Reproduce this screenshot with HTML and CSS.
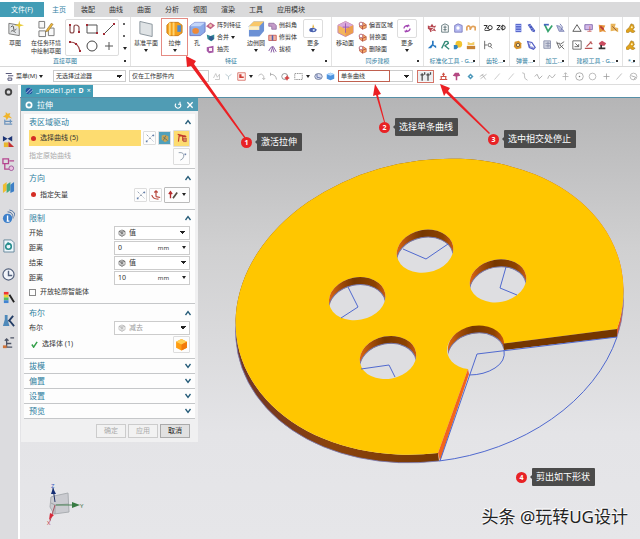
FILE: index.html
```html
<!DOCTYPE html>
<html lang="zh-CN">
<head>
<meta charset="utf-8">
<title>_model1.prt</title>
<link rel="stylesheet" href="styles.css">
</head>
<body>
<svg class="defs" aria-hidden="true">
  <symbol id="cube" viewBox="0 0 12 12"><path d="M1 3.500 6 1l5 2.500v5.500L6 11.500 1 9z" fill="#ff9d12"/><path d="m1 3.500 5 2.500 5-2.500L6 1z" fill="#ffcf55"/><path d="M6 6v5.500L11 9V3.500z" fill="#f27a0c"/></symbol>
  <symbol id="wirecube" viewBox="0 0 12 12"><path d="m1.500 3.500 4.500-2 4.500 2v5l-4.500 2.500-4.500-2.500zM1.500 3.500 6 5.500l4.500-2M6 5.500V11M3 5l6-2.500M3 8l3-1.500 3 1.500" fill="none" stroke="#555"/></symbol>
  <symbol id="points" viewBox="0 0 12 12"><path d="m2 2 8 8M10 2 2 10" stroke="#8793a6" stroke-dasharray="3 2"/><path d="M9 2h2v2H9zM1 9h2v2H1z" fill="#6480ad"/></symbol>
  <symbol id="up" viewBox="0 0 8 6"><path d="m1.500 5 2.500-3.500L6.500 5" fill="none" stroke="#245b78" stroke-width="1.300"/></symbol>
  <symbol id="down" viewBox="0 0 8 6"><path d="M1.500 1 4 4.500 6.500 1" fill="none" stroke="#245b78" stroke-width="1.300"/></symbol>
  <symbol id="face" viewBox="0 0 12 12"><path d="m2 4 5-2 4 3v4l-5 2-4-3z" fill="#f4a867" stroke="#b44c3a" stroke-width=".8"/><path d="m2 4 4 3v4M6 7l5-2" stroke="#a44038" fill="none"/><circle cx="4" cy="4" r="2.500" fill="#fff" stroke="#a44c63"/></symbol>
  <symbol id="more" viewBox="0 0 12 12"><path d="M1 8q0-3 5-3 5 1 5 3-1 3-5 3-5 0-5-3" fill="#4a60ae"/><path d="m6 0 2 5H5z" fill="#e4b13c"/><circle cx="7" cy="8" r="1.500" fill="#c7dcf5"/></symbol>
  <symbol id="gold" viewBox="0 0 12 12"><path d="m4 5 2-4 3 1 1 4-2 2 3 2-3 2-3-2-3 2-3-2z" fill="#e0a21c" stroke="#8f681c" stroke-width=".6"/><circle cx="7" cy="5" r="1.200" fill="#fff1bd"/></symbol>
</svg>

<div class="app">
  <nav class="tabs" aria-label="功能区">
    <a class="file" href="#">文件(F)</a><a class="active" href="#">主页</a><a href="#">装配</a><a href="#">曲线</a><a href="#">曲面</a><a href="#">分析</a><a href="#">视图</a><a href="#">渲染</a><a href="#">工具</a><a href="#">应用模块</a>
  </nav>

  <div class="ribbon">
    <section class="group">
      <div class="body">
        <button class="big w30"><svg viewBox="0 0 18 18"><path d="m2 3 11 2v11L2 14z" fill="#e4e6e8" stroke="#777"/><path d="M4 7q3-3 3 1t3 1M4 12q2-3 5 1" fill="none" stroke="#555"/><path d="m13 0 1 4 4 1-4 1-1 4-1-4-4-1 4-1z" fill="#e7ca31"/></svg><span>草图</span></button>
        <button class="big w32"><svg viewBox="0 0 18 18"><path d="M1 1h6v7H1zM1 11h7v6H1zM11 8h6v8h-6z" fill="#f8f8f8" stroke="#777"/><path d="m9 10 5-7 2 1-5 7-3 1z" fill="#edb83c" stroke="#8c6a2a" stroke-width=".6"/></svg><span>在任务环境<br>中绘制草图</span></button>
        <div class="gallery">
          <svg viewBox="0 0 12 12"><path d="M1 2v6q0 2 2 2t2-2V4q0-2 2-2t3 2v5" fill="none" stroke="#8b4c4c" stroke-width="1.200"/><path d="M0 1h2v2H0zM9 8h2v2H9z" fill="#a22b35"/></svg>
          <svg viewBox="0 0 12 12"><path d="M1 2h10v8H1z" fill="none" stroke="#555"/><path d="M0 1h2v2H0zM10 9h2v2h-2z" fill="#a22b35"/></svg>
          <svg viewBox="0 0 12 12"><path d="M1 11 11 1" stroke="#555"/><path d="M0 10h2v2H0zM10 0h2v2h-2z" fill="#a22b35"/></svg>
          <svg viewBox="0 0 12 12"><path d="M1 2q8 0 10 9" fill="none" stroke="#9a4c4c" stroke-width="1.200"/><path d="M0 1h2v2H0zM6 3h2v2H6zM10 10h2v2h-2z" fill="#a22b35"/></svg>
          <svg viewBox="0 0 12 12"><circle cx="6" cy="6" r="5" fill="none" stroke="#444"/></svg>
          <svg viewBox="0 0 12 12"><path d="M6 2v8M2 6h8" stroke="#555"/></svg>
        </div>
        <div class="scroll"><i></i><i></i><i class="arrow"></i></div>
      </div>
      <footer>直接草图</footer>
    </section>
    <section class="group">
      <div class="body">
        <button class="big w30"><svg viewBox="0 0 18 18"><path d="m2 1 13 3v13L2 14z" fill="#dfe3e5" stroke="#89949b"/></svg><span>基准平面</span><i class="arrow"></i></button>
        <button class="big w27 marked"><svg viewBox="0 0 18 18"><path d="m1 5 3-3h9l4 3v8l-4 3H4l-3-3z" fill="#f5a11b" stroke="#c97912"/><path d="M4 2v14M8 2v14" stroke="#ffd574" stroke-width="2"/><path d="M12 5h4v7h-4z" fill="#4e8bd1"/></svg><span>拉伸</span><i class="arrow"></i></button>
        <button class="big w18"><svg viewBox="0 0 18 18"><path d="m1 6 5-4h11v10l-5 4H1z" fill="#8baae8" stroke="#6c79c7"/><path d="m1 6 5-4h11l-5 4z" fill="#c3d6fb"/><ellipse cx="7" cy="11" rx="3.500" ry="3" fill="#ef8937"/></svg><span>孔</span></button>
        <div class="stack w38">
          <button><svg viewBox="0 0 12 12"><path d="m0 7 6-5 6 4-6 5z" fill="#c36488"/><circle cx="6" cy="6" r="2" fill="#efc5b0"/></svg>阵列特征</button>
          <button><svg viewBox="0 0 12 12"><path d="m1 2 5 2 5-2v6l-4 3-5-3z" fill="#328c97"/><circle cx="7" cy="7" r="3" fill="#315c91"/></svg>合并<i class="arrow"></i></button>
          <button><svg viewBox="0 0 12 12"><path d="m1 3 9-2v9l-6 1-3-3z" fill="#a75ba7"/><path d="M4 4h4v4H4z" fill="#fff0f5"/></svg>抽壳</button>
        </div>
        <button class="big w24"><svg viewBox="0 0 18 18"><path d="m1 6 5-5h11v10l-5 6H1z" fill="#6c91d5"/><path d="m1 6 5-5h11l-5 5z" fill="#f9c86a"/><path d="M1 6h11v4H1z" fill="#fff0c4"/></svg><span>边倒圆</span><i class="arrow"></i></button>
        <div class="stack w34">
          <button><svg viewBox="0 0 12 12"><path d="M1 3h7l3 3v5H5V7H1z" fill="#c49bc8" stroke="#8a6799"/></svg>倒斜角</button>
          <button><svg viewBox="0 0 12 12"><path d="M1 3h10v7H1z" fill="#f1b4a2" stroke="#c34a44"/><path d="M6 3v7" stroke="#4f63b0" stroke-width="2"/></svg>修剪体</button>
          <button><svg viewBox="0 0 12 12"><path d="m1 8 3-5 3-1 4 7M4 10l2-7 2 7" fill="none" stroke="#875aa3" stroke-width="1.300"/></svg>拔模</button>
        </div>
        <button class="big w22 boxed"><svg viewBox="0 0 12 12"><use href="#more"/></svg><span>更多</span><i class="arrow"></i></button>
      </div>
      <footer>特征</footer>
    </section>
    <section class="group">
      <div class="body">
        <button class="big w26"><svg viewBox="0 0 18 18"><path d="m1 5 8-4 8 4v8l-8 4-8-4z" fill="#f3b65e" stroke="#c485ae"/><path d="m1 5 8-4 8 4-8 4z" fill="#d9a8da"/><path d="m9 9 8-4v8l-8 4z" fill="#ed9e4d"/><path d="M9 3v10M6 7h7" stroke="#9b59b2"/></svg><span>移动面</span></button>
        <div class="stack w38">
          <button><svg viewBox="0 0 12 12"><use href="#face"/></svg>偏置区域</button>
          <button><svg viewBox="0 0 12 12"><use href="#face"/></svg>替换面</button>
          <button><svg viewBox="0 0 12 12"><use href="#face"/></svg>删除面</button>
        </div>
        <button class="big w22 boxed"><svg viewBox="0 0 12 12"><path d="M2 6q0-4 6-4L7 1m1 1L6 4M10 6q0 4-6 4l1 1m-1-1 2-2" fill="none" stroke="#a347b3" stroke-width="1.800"/></svg><span>更多</span><i class="arrow"></i></button>
      </div>
      <footer>同步建模</footer>
    </section>
    <section class="group">
      <div class="tools four">
        <svg viewBox="0 0 12 12"><path d="m1 3 3 1 2-3 2 3 3-1-2 4 2 3-4-1-3 2-1-3-2-1z" fill="#b64750"/><path d="m3 5 6 1-4 3" stroke="#fff" fill="none"/></svg>
        <svg viewBox="0 0 12 12"><path d="m2 3 4-2 4 2v8H2z" fill="none" stroke="#566b70"/><path d="M4 5h4M4 8h4M6 3v7" stroke="#566b70"/></svg>
        <svg viewBox="0 0 12 12"><path d="M2 3 6 1l5 2v8H2z" fill="#b5baf2" stroke="#7777bc"/><circle cx="6" cy="6" r="2" fill="#fff"/></svg>
        <svg viewBox="0 0 12 12"><path d="M1 9V5q2-3 4 0v3q2-6 6-3v4" fill="none" stroke="#e2a25a" stroke-width="2"/></svg>
        <svg viewBox="0 0 12 12"><path d="M6 1v4L1 10h4l2-3 4 3V7L8 6V1z" fill="#2878c0"/></svg>
        <svg viewBox="0 0 12 12"><path d="m2 10 4-8q4-1 4 2L6 7l5 4" fill="none" stroke="#338a77" stroke-width="1.600"/></svg>
        <svg viewBox="0 0 12 12"><circle cx="7" cy="5" r="4" fill="#f2c430"/><path d="M1 11V6h4l1 3-2 2z" fill="#3384bf"/></svg>
        <svg viewBox="0 0 12 12"><path d="M1 7h10v4H1z" fill="#c98434"/><path d="m2 2 4 2 4-2v4H2z" fill="#f3cd66"/></svg>
      </div>
      <footer>标准化工具 - G...</footer>
    </section>
    <section class="group">
      <div class="tools">
        <svg viewBox="0 0 12 12"><path d="M1 3h4L2 8m3-1 1-2" fill="none" stroke="#333" stroke-width="1.200"/><circle cx="8.500" cy="5.500" r="2.500" fill="none" stroke="#333" stroke-width="1.200"/><path d="M2 9h6" stroke="#333"/></svg>
        <svg viewBox="0 0 12 12"><path d="M1 3h4L1 8h4" fill="none" stroke="#333" stroke-width="1.200"/><circle cx="8.500" cy="5.500" r="2.500" fill="none" stroke="#333" stroke-width="1.200"/><path d="M8 2v7" stroke="#333"/></svg>
        <svg viewBox="0 0 12 12"><path d="M2 1v10M2 6h3" stroke="#555"/><circle cx="8" cy="6" r="2" fill="none" stroke="#555"/><path d="m9 8 2 2" stroke="#555"/></svg>
      </div>
      <footer>齿轮...</footer>
    </section>
    <section class="group">
      <div class="tools">
        <svg viewBox="0 0 12 12"><path d="M3 1h7v10H3z" fill="#5969cc"/><path d="M3 3h7M3 6h7M3 9h7" stroke="#b5c2ff"/></svg>
        <svg viewBox="0 0 12 12"><path d="m2 2 3-1 6 8-1 2-3-1z" fill="#4354bd"/><path d="m3 4 3-1M5 7l3-1M7 9l3-1" stroke="#e0e5ff" stroke-width=".6"/></svg>
        <svg viewBox="0 0 12 12"><path d="m2 2 5-1 3 3v6l-6 1-3-3z" fill="#d7932c"/><circle cx="6" cy="6" r="2" fill="#ffe7a7" stroke="#624f42"/></svg>
        <svg viewBox="0 0 12 12"><path d="m2 2 5 1 4 6-2 2-5-2z" fill="none" stroke="#5560c5" stroke-width="1.500"/><path d="m5 4-1 4 5 1" fill="none" stroke="#5560c5"/></svg>
      </div>
      <footer>弹簧...</footer>
    </section>
    <section class="group">
      <div class="tools">
        <svg viewBox="0 0 12 12"><path d="m2 2 4 8 5-7" fill="none" stroke="#36a36d" stroke-width="2"/><path d="M1 2h6" stroke="#4466bd" stroke-width="2"/></svg>
        <svg viewBox="0 0 12 12"><path d="m2 3 4 1 5 6H5z" fill="#b9bddb" stroke="#7c83b4"/><path d="m6 1 3 4-2 4" fill="none" stroke="#666eab"/></svg>
        <svg viewBox="0 0 12 12"><path d="M1 1h8v9H1z" fill="#d2d5e1" stroke="#858da8"/><path d="M3 4h6M3 7h6M6 2v7" stroke="#858da8"/></svg>
        <svg viewBox="0 0 12 12"><path d="m2 2 3 8 5-4M5 6l6-4M6 6l5 5M2 4h4" fill="none" stroke="#555"/></svg>
      </div>
      <footer>加工...</footer>
    </section>
    <section class="group">
      <div class="tools four">
        <svg viewBox="0 0 12 12"><path d="m6 2 5 8H1z" fill="none" stroke="#444"/></svg>
        <svg viewBox="0 0 12 12"><path d="M1 2h9v6H1z" fill="#d3b9e9" stroke="#7a62a8"/><path d="M4 10h5M7 4v6" stroke="#c66"/></svg>
        <svg viewBox="0 0 12 12"><path d="m2 2 8 1-2 4 3 4-4-1-4 1z" fill="#e4933a"/><path d="m4 4 4 4" stroke="#b93838" stroke-width="2"/></svg>
        <svg viewBox="0 0 12 12"><path d="M2 1h6l-1 4 4 1v5l-4-2-5 1z" fill="#e8b45a"/><path d="m4 4 5 5" stroke="#8c5238"/></svg>
        <svg viewBox="0 0 12 12"><path d="M1 1h10v10H1z" fill="none" stroke="#555"/><path d="M3 8h5V5M4 4l4 4" fill="none" stroke="#555"/></svg>
        <svg viewBox="0 0 12 12"><path d="M1 10h9M3 8l6-6M7 2l3 3" stroke="#b85050" stroke-width="1.400"/></svg>
        <svg viewBox="0 0 12 12"><path d="m2 4 4-3 5 3-2 3H4z" fill="#c94c5f"/><path d="M5 6v4M2 10h8" stroke="#333" stroke-width="2"/></svg>
      </div>
      <footer>建模工具 - G...</footer>
    </section>
    <section class="group">
      <div class="tools one"><svg><use href="#gold"/></svg><svg><use href="#gold"/></svg></div>
      <footer>*..</footer>
    </section>
  </div>

  <div class="selbar">
    <button class="menu"><svg viewBox="0 0 12 12"><path d="M1 2h8M4 5h7M4 8h5v3H4z" fill="none" stroke="#557" stroke-width="1.300"/></svg>菜单(M)<i class="arrow"></i></button>
    <select class="filter" aria-label="选择过滤器"><option>无选择过滤器</option></select>
    <select class="scope" aria-label="选择范围"><option>仅在工作部件内</option></select>
    <div class="icons left">
      <svg viewBox="0 0 12 12"><path d="m2 8 3-6 2 5 3-4v7H4" fill="none" stroke="#bbb"/></svg>
      <svg viewBox="0 0 12 12"><path d="m2 3 4 3 4-3M6 6v4" fill="none" stroke="#a9bdc6"/></svg>
      <svg viewBox="0 0 12 12"><path d="M1 1h10v10H1z" fill="#fff3f1" stroke="#d25b50"/><path d="M3 3h3v3h3v2H3z" fill="#cf3f37"/></svg><i class="arrow"></i>
      <svg viewBox="0 0 12 12"><path d="M2 5q4-5 7 1v4M7 8l2 2 2-2" fill="none" stroke="#aaa"/></svg>
      <svg viewBox="0 0 12 12"><path d="M2 3q7 0 8 7M2 1v4" fill="none" stroke="#999"/></svg>
      <svg viewBox="0 0 12 12"><circle cx="5" cy="6" r="4" fill="none" stroke="#777"/><path d="M8 5v6M5 8h6" stroke="#d43c3c" stroke-width="2"/></svg>
      <svg viewBox="0 0 12 12"><path d="M1 2h10v8H1z" fill="none" stroke="#777" stroke-dasharray="2 1"/></svg><i class="arrow"></i>
      <svg viewBox="0 0 12 12"><ellipse cx="6" cy="6" rx="5" ry="4" fill="#d8dcf0" stroke="#596888"/><path d="M4 3v4l5 1" fill="none" stroke="#485d9b"/></svg>
      <svg viewBox="0 0 12 12"><path d="m1 3 5-2 5 2v6l-5 2-5-2z" fill="#4f94df"/><path d="m1 3 5 2 5-2-5-2z" fill="#b5dbff"/></svg>
    </div>
    <select class="rule" aria-label="曲线规则"><option>单条曲线</option></select>
    <div class="icons right">
      <svg class="stop" viewBox="0 0 18 12"><path d="M0 0h18v12H0z" fill="#eceef0"/><path d="M5 2v9M12 2v9M3 4h4M10 4h4M8 1v3M15 1v3" stroke="#484848" stroke-width="1.500"/></svg>
      <svg viewBox="0 0 12 12"><path d="M6 1v5M2 6h8M3 6v4M9 6v4M1 10h10M4 3h4" stroke="#ce5145" stroke-width="1.500"/></svg>
      <svg viewBox="0 0 12 12"><path d="m1 5 3-4h5l2 4-4 1v5H5V6z" fill="#b54a83"/></svg>
      <svg viewBox="0 0 12 12"><path d="m6 2 4 4-4 4-4-4z" fill="#4e99bb"/><circle cx="6" cy="6" r="1" fill="#fff"/></svg>
      <svg viewBox="0 0 12 12"><path d="m2 9 8-6M4 3l5 7M1 6l5-3" stroke="#aaa"/></svg>
      <svg viewBox="0 0 12 12"><path d="m2 10 7-8" stroke="#bbb"/></svg>
      <svg viewBox="0 0 12 12"><path d="m2 10 7-8" stroke="#bbb"/></svg>
      <svg viewBox="0 0 12 12"><path d="M3 1q4 0 3 4t4 6" fill="none" stroke="#aaa"/></svg>
      <svg viewBox="0 0 12 12"><path d="m1 6 3-3 3 6 4-4" fill="none" stroke="#999"/></svg>
      <svg viewBox="0 0 12 12"><path d="M1 9q2-7 4-3t6-3" fill="none" stroke="#999"/></svg>
      <svg viewBox="0 0 12 12"><path d="M6 1v10M2 6h8M4 3l2-2 2 2" fill="none" stroke="#aaa"/></svg>
      <svg viewBox="0 0 12 12"><circle cx="6" cy="6" r="5" fill="none" stroke="#999"/><circle cx="6" cy="6" r="1" fill="#777"/></svg>
      <svg viewBox="0 0 12 12"><circle cx="6" cy="6" r="4.500" fill="none" stroke="#aaa"/></svg>
      <svg viewBox="0 0 12 12"><path d="M6 2v8M2 6h8" stroke="#999"/></svg>
      <svg viewBox="0 0 12 12"><path d="m2 10 7-8" stroke="#aaa"/></svg>
      <svg viewBox="0 0 12 12"><circle cx="6" cy="6" r="4.500" fill="none" stroke="#aaa"/><path d="m3 5 6 2-3 3" fill="none" stroke="#999"/></svg>
    </div>
  </div>

  <div class="workspace">
    <aside class="rail">
      <svg class="short" viewBox="0 0 14 14"><circle cx="7" cy="7" r="3" fill="none" stroke="#444" stroke-width="2"/></svg>
      <svg class="space" viewBox="0 0 14 14"><path d="m4 0 2 2 3-1-1 3 3 3-4-1-2 3-1-3-3-1 3-2z" fill="#f0b52d"/><path d="M3 8v5h8M3 10h8M9 8v4" fill="none" stroke="#6d94bd" stroke-width="1.300"/></svg>
      <svg viewBox="0 0 14 14"><path d="m1 1 5 3 5-3v6L6 4 1 7z" fill="#1c3475"/><path d="M2 8h5v5H2z" fill="#e8b62d"/><path d="m7 7 6 6H7z" fill="#c32f32"/></svg>
      <svg viewBox="0 0 14 14"><path d="M1 1h6v5H1zM8 3h5M3 6v6h5" fill="none" stroke="#b54590" stroke-width="1.400"/><circle cx="10" cy="11" r="2.500" fill="#ecc0e2" stroke="#a05799"/></svg>
      <svg viewBox="0 0 14 14"><path d="m1 4 4-3v9l-4 3z" fill="#efbd32"/><path d="m5 4 4-3v9l-4 3z" fill="#44aa81"/><path d="m9 4 4-3v10l-4 2z" fill="#3d7fc6"/></svg>
      <svg class="space" viewBox="0 0 14 14"><circle cx="6" cy="9" r="5" fill="#3c7fca"/><path d="M6 6v6M5 12h3" stroke="#fff" stroke-width="1.500"/><path d="M6 2q6 0 6 7M8 0q6 1 6 7" fill="none" stroke="#456a9d"/></svg>
      <svg class="space" viewBox="0 0 14 14"><path d="M2 1h8l3 3v10H2z" fill="#edf6fb" stroke="#65879a"/><circle cx="7" cy="8" r="3" fill="none" stroke="#268c8c" stroke-width="1.700"/><path d="m6 3 3 2-3 2z" fill="#268c8c"/></svg>
      <svg class="space" viewBox="0 0 14 14"><circle cx="7" cy="7" r="6" fill="#f1f4fa" stroke="#53617c" stroke-width="1.300"/><path d="M7 3v5h4" fill="none" stroke="#53617c" stroke-width="1.500"/></svg>
      <svg viewBox="0 0 14 14"><path d="M2 1h5v3H2z" fill="#e33"/><path d="M2 4h5v3H2z" fill="#eed332"/><path d="M2 7h5v3H2z" fill="#54bd60"/><path d="M2 10h5v3H2z" fill="#4284d2"/><path d="m8 4 5 8" stroke="#222" stroke-width="2"/></svg>
      <svg viewBox="0 0 14 14"><path d="M3 1h3v5l2 7H1l2-7z" fill="#4e89ba"/><path d="m7 8 5-6M8 7l5 6" stroke="#233d66" stroke-width="2"/></svg>
      <svg viewBox="0 0 14 14"><path d="M5 2v9h6M5 7h5M3 4l2-2 2 2M9 1h4" fill="none" stroke="#4c5365" stroke-width="1.400"/><path d="M1 9h4v3H1z" fill="#d0743b"/></svg>
    </aside>
    <div class="document">
      <header class="docbar"><div class="doctab"><svg viewBox="0 0 12 12"><circle cx="6" cy="6" r="5" fill="#2450a1"/><path d="m2 9 7-7M6 10l5-5" stroke="#fff"/></svg>_model1.prt <b>D</b><span>×</span></div></header>
      <main class="stage">
        <svg class="model" viewBox="20 98 620 441" preserveAspectRatio="xMidYMin meet" role="img" aria-label="实体模型">
          <defs>
            <linearGradient id="rim"><stop offset="0" stop-color="#e86b12"/><stop offset=".22" stop-color="#a44c0a"/><stop offset=".45" stop-color="#763700"/><stop offset=".8" stop-color="#8d4200"/><stop offset="1" stop-color="#d55f13"/></linearGradient>
            <linearGradient id="edge"><stop offset="0" stop-color="#6f3427"/><stop offset=".25" stop-color="#8b430d"/><stop offset=".6" stop-color="#713500"/><stop offset="1" stop-color="#e95728"/></linearGradient>
            <clipPath id="holeclip"><ellipse rx="28.500" ry="21.300" transform="rotate(-10.800)"/></clipPath>
            <g id="rimpart" clip-path="url(#holeclip)"><path fill-rule="evenodd" d="M-30-24h60v48h-60zM-28 12.840A28.500 21.300-10.800 1 1 28 2.160 28.500 21.300-10.800 1 1-28 12.840z" fill="url(#rim)"/><ellipse cy="7.500" rx="28.500" ry="21.300" transform="rotate(-10.800 0 7.500)" fill="none" stroke="#7776a8"/></g>
            <g id="hole"><ellipse rx="28.500" ry="21.300" transform="rotate(-10.800)" fill="#dedee1"/><use href="#rimpart"/></g>
          </defs>
          <path d="M617 337A195.500 146-10.800 1 0 439 461l-1-8A195.500 146-10.800 1 1 617 329z" fill="url(#edge)"/>
          <path d="M617 337A195.500 146-10.800 1 0 439 461" fill="none" stroke="#7779b4" stroke-width=".8"/>
          <path d="M617 329A195.500 146-10.800 1 0 438 453L468 369A28.500 21.300-10.800 1 1 503.500 343.500z" fill="#ffc600"/>
          <use href="#rimpart" x="476" y="347"/>
          <path d="m503.500 343.500 113.500-14.500v8l-113 13z" fill="#743600"/>
          <path d="m438 453 30-84 1 5-29 87z" fill="#f3641c"/>
          <g fill="none" stroke="#5069cf" stroke-width="1">
            <path d="m617 337-140 17-37 107M617 337A195.500 146-10.800 0 1 439 461"/>
            <path d="M504 350q2 11-9 18-11 7-26 7"/>
          </g>
          <use href="#hole" x="425" y="251.200"/><use href="#hole" x="498" y="280.800"/><use href="#hole" x="357.200" y="298.700"/><use href="#hole" x="388" y="357.500"/>
          <path d="m403 249 23 10 22-15M506 267l-6 21 17 7M348 287l10 20-17 11M361 369l28-4 6 12" fill="none" stroke="#5069cf"/>
          <g>
            <path d="m54 496 14-3 1 19-15 2-4-7 1-10z" fill="#cacbd0" stroke="#aaaeb2"/><path d="m51 503 4 2 14-1M55 505v9" fill="none" stroke="#a0a3a7"/>
            <path d="m55 502-2-14" stroke="#253668"/><path d="m51 494 2-6 3 6z" fill="#152f74"/>
            <path d="M56 505h20" stroke="#4a8656"/><path d="m72 502 8 3-8 3z" fill="#377b43"/>
            <path d="m55 505-5 16" stroke="#a95460"/><path d="m49 520 1-7 4 2z" fill="#d52939"/>
            <text class="axis z" x="51" y="488">Z</text><text class="axis y" x="80" y="508">Y</text><text class="axis x" x="47" y="525">X</text>
          </g>
        </svg>

        <form class="dialog">
          <header><svg viewBox="0 0 12 12"><circle cx="6" cy="6" r="4" fill="none" stroke="#fff" stroke-width="2.500"/></svg><h1>拉伸</h1><button type="button" aria-label="重置"><svg viewBox="0 0 12 12"><path d="M3 4a4 4 0 1 0 6 0M9 1v4H6" fill="none" stroke="#fff" stroke-width="1.600"/></svg></button><button type="button" aria-label="关闭"><svg viewBox="0 0 12 12"><path d="m2 2 8 8M10 2l-8 8" stroke="#fff" stroke-width="2"/></svg></button></header>
          <div class="sections">
            <section>
              <h2>表区域驱动<svg><use href="#up"/></svg></h2>
              <div class="row tall"><div class="pick selected"><i class="need"></i>选择曲线 (5)</div><button class="tool" type="button" aria-label="点构造器"><svg><use href="#points"/></svg></button><button class="tool blue" type="button" aria-label="绘制截面"><svg viewBox="0 0 12 12"><path d="m2 3 4-1 4 2v5l-4 2-4-3z" fill="#c9a558"/><path d="m4 5 5 4M7 3 4 9" stroke="#5d6d5c"/></svg></button><button class="tool yellow wide" type="button" aria-label="曲线"><svg viewBox="0 0 14 12"><path d="M2 11 3 3h9M1 1l12 3M8 3v7" fill="none" stroke="#c23a2c" stroke-width="1.600"/><path d="M9 6h4v5H9z" fill="#d9865a" stroke="#b54a3c"/></svg></button></div>
              <div class="row tall faded"><span class="grow">指定原始曲线</span><button class="tool wide" type="button" aria-label="原始曲线"><svg viewBox="0 0 12 12"><path d="M2 2q7-1 6 5-1 3-4 4" fill="none" stroke="#8293a3"/><path d="M9 3h2v2H9z" fill="#7184aa"/></svg></button></div>
            </section>
            <section class="direction">
              <h2>方向<svg><use href="#up"/></svg></h2>
              <div class="row tall"><div class="pick"><i class="need"></i>指定矢量</div><button class="tool" type="button" aria-label="反向"><svg><use href="#points"/></svg></button><button class="tool" type="button" aria-label="矢量对话框"><svg viewBox="0 0 12 12"><path d="M6 1v7M4 3l2-2 2 2M6 8l5 1M1 6q1 5 8 5" fill="none" stroke="#b8463a" stroke-width="1.400"/></svg></button><button class="tool split" type="button" aria-label="推断矢量"><svg viewBox="0 0 12 12"><path d="M3 10V3M1 5l2-3 2 3" fill="none" stroke="#b52d2d" stroke-width="1.600"/><path d="m6 10 5-7" stroke="#554c42" stroke-width="2"/></svg><i class="arrow"></i></button></div>
            </section>
            <section class="limits">
              <h2>限制<svg><use href="#up"/></svg></h2>
              <div class="row"><label for="start">开始</label><div class="field"><svg><use href="#wirecube"/></svg><select id="start"><option>值</option></select></div></div>
              <div class="row"><label for="d1">距离</label><div class="field"><input id="d1" value="0"><span>mm</span><i class="arrow"></i></div></div>
              <div class="row"><label for="end">结束</label><div class="field"><svg><use href="#wirecube"/></svg><select id="end"><option>值</option></select></div></div>
              <div class="row"><label for="d2">距离</label><div class="field"><input id="d2" value="10"><span>mm</span><i class="arrow"></i></div></div>
              <label class="check"><input type="checkbox">开放轮廓智能体</label>
            </section>
            <section class="boolean">
              <h2>布尔<svg><use href="#up"/></svg></h2>
              <div class="row"><label for="bool">布尔</label><div class="field dim"><svg><use href="#wirecube"/></svg><select id="bool"><option>减去</option></select></div></div>
              <div class="row tall"><div class="pick"><svg class="ok" viewBox="0 0 8 8"><path d="m1 4 2 3 4-6" fill="none" stroke="#35a04a" stroke-width="1.700"/></svg>选择体 (1)</div><button class="tool wide" type="button" aria-label="选择体"><svg class="solid"><use href="#cube"/></svg></button></div>
            </section>
            <section class="closed"><h2>拔模<svg><use href="#down"/></svg></h2></section>
            <section class="closed"><h2>偏置<svg><use href="#down"/></svg></h2></section>
            <section class="closed"><h2>设置<svg><use href="#down"/></svg></h2></section>
            <section class="closed"><h2>预览<svg><use href="#down"/></svg></h2></section>
          </div>
          <footer><button type="button" disabled>确定</button><button type="button" disabled>应用</button><button type="button">取消</button></footer>
        </form>
      </main>
    </div>
  </div>

  <svg class="arrows" viewBox="0 0 640 539" aria-hidden="true"><g fill="#eb2024"><path d="m186 56 10 5-2 3 52 74-1 1-54-73-4 1z"/><path d="m375 84 6 10-3 1 7 27h-1l-8-27-3 1z"/><path d="m440 84 10 4-2 3 42 42-1 1-43-41-2 3z"/></g></svg>
  <div class="note one"><b>1</b><span>激活拉伸</span></div>
  <div class="note two"><b>2</b><span>选择单条曲线</span></div>
  <div class="note three"><b>3</b><span>选中相交处停止</span></div>
  <div class="note four"><b>4</b><span>剪出如下形状</span></div>
  <div class="watermark">头条 @玩转UG设计</div>
</div>
</body>
</html>
```
FILE: styles.css
```css
* { box-sizing: border-box; }
body { margin: 0; color: #333; background: #fff; font: 6px/8px "Noto Sans", "Noto Sans CJK SC", sans-serif; }
button, input, select { margin: 0; padding: 0; border: 0; border-radius: 0; background: none; color: inherit; font: inherit; }
select { appearance: none; }
a { color: inherit; text-decoration: none; }
i { display: block; flex: none; }
svg { display: block; flex: none; }
.defs { position: absolute; width: 0; height: 0; }
.arrow { width: 0; height: 0; border: 2px solid transparent; border-top: 3px solid #222; border-bottom: 0; }
.app { position: relative; display: flex; flex-direction: column; min-height: 100vh; overflow: hidden; }

.tabs { display: flex; height: 17px; padding-top: 2px; background: linear-gradient(#fff 2px, #dadadb 2px); font-size: 7px; line-height: 15px; }
.tabs a { padding: 0 7px; }
.tabs .file { width: 44px; padding: 0; background: #439db6; color: #fff; text-align: center; }
.tabs .active { padding: 0 8px; background: #fff; color: #3382a5; }

.ribbon { display: grid; grid-template-columns: 131fr 201fr 92fr 56fr 30fr 30fr 29fr 54fr 17fr; height: 50px; border-bottom: 1px solid #d8d8d8; }
.group { display: flex; flex-direction: column; min-width: 0; overflow: hidden; border-right: 1px solid #e3e3e3; }
.group footer { position: relative; padding-bottom: 1px; color: #2f7da0; text-align: center; white-space: nowrap; }
.group footer::after { content: ""; position: absolute; right: 4px; bottom: 4px; width: 2px; height: 2px; background: #333; }
.body { display: flex; flex: 1; padding-top: 1px; min-height: 0; }
.big { display: flex; flex-direction: column; align-items: center; flex: none; height: 38px; padding-top: 2px; white-space: nowrap; }
.big svg { width: 17px; height: 18px; margin-bottom: 1px; }
.big .arrow { margin-top: 2px; }
.w18 { width: 18px; } .w22 { width: 22px; } .w24 { width: 24px; } .w26 { width: 26px; } .w27 { width: 27px; }
.w30 { width: 30px; } .w32 { width: 32px; } .w34 { width: 34px; } .w38 { width: 38px; }
.marked { padding-top: 1px; border: 1px solid #e58b83; }
.boxed { padding-top: 1px; }
.boxed svg { width: 20px; height: 19px; padding: 4px; border: 1px solid #ddd; border-radius: 2px; }
.gallery { display: grid; grid-template-columns: repeat(3, 1fr); place-items: center; flex: none; width: 54px; height: 37px; margin: 1px 0 0 3px; border: 1px solid #ddd; border-radius: 2px; }
.gallery svg { width: 12px; height: 12px; }
.scroll { display: flex; flex-direction: column; justify-content: space-around; height: 37px; margin-left: 4px; }
.scroll i:not(.arrow) { width: 2px; height: 2px; background: #666; }
.stack { display: flex; flex-direction: column; flex: none; padding-top: 1px; }
.stack button { display: flex; align-items: center; gap: 2px; height: 12px; white-space: nowrap; }
.stack svg { width: 9px; height: 9px; }
.tools { display: grid; grid-template-columns: repeat(2, 1fr); grid-template-rows: 17px 17px; place-items: center; flex: 1; padding: 2px 2px 0; align-content: start; }
.tools.four { grid-template-columns: repeat(4, 1fr); }
.tools.one { grid-template-columns: 1fr; }
.tools svg { width: 10px; height: 10px; }

.selbar { display: flex; align-items: center; height: 18px; padding: 1px 2px 0 5px; border-bottom: 1px solid #ddd; }
.menu { display: flex; align-items: center; gap: 2px; width: 48px; }
.menu svg { width: 9px; height: 9px; }
.selbar select { height: 12px; padding: 0 2px; border: 1px solid #ccc; line-height: 10px; background: conic-gradient(from -45deg at 50% 100%, #222 90deg, transparent 0) right 3px center / 6px 3px no-repeat; }
.filter { width: 73px; } .selbar .scope { width: 80px; margin-left: 3px; background: none; }
.icons { display: flex; align-items: center; justify-content: space-between; }
.icons svg { width: 9px; height: 9px; }
.icons.left { width: 129px; padding: 0 3px; }
.selbar .rule { width: 75px; border-image: linear-gradient(90deg, #c0604f 52px, #ccc 52px) 1; background: conic-gradient(from -45deg at 50% 100%, #222 90deg, transparent 0) right 3px center / 6px 3px no-repeat, linear-gradient(#c0604f, #c0604f) 50px 0 / 1px 100% no-repeat; }
.icons.right { flex: 1; padding-left: 4px; }
.icons .stop { width: 17px; height: 13px; border: 1px solid #d47367; }

.workspace { display: flex; flex: 1; }
.rail { display: flex; flex-direction: column; align-items: center; width: 20px; padding-right: 1px; border-right: 2px solid #fff; background: #dcdcdf; }
.rail svg { width: 13px; height: 23px; }
.rail .short { height: 14px; margin-bottom: 2px; }
.rail .space { margin-top: 6px; }
.document { display: flex; flex: 1; flex-direction: column; }
.docbar { height: 13px; padding-left: 1px; border-bottom: 1px solid #568fa7; }
.doctab { display: flex; align-items: center; gap: 3px; width: 72px; height: 12px; padding-left: 4px; background: #439db6; color: #fff; font-size: 7px; }
.doctab svg { width: 8px; height: 8px; }
.stage { position: relative; flex: 1; padding-left: 1px; background: linear-gradient(#b5b5b6, #d0d0d1 34%, #e4e4e7 76%, #e6e6e9); }
.model { position: absolute; inset: 0; width: 100%; height: 100%; }
.axis { font-size: 6px; }
.x { fill: #c23b4a; } .y { fill: #44744c; } .z { fill: #3b5abf; }

.dialog { position: relative; width: 177px; padding-bottom: 4px; background: #f0f0f1; font-size: 7px; line-height: 10px; }
.dialog > header { display: flex; align-items: center; gap: 4px; height: 13px; padding: 0 4px; background: #509cb4; color: #fff; }
.dialog > header svg { width: 8px; height: 8px; }
h1, h2 { margin: 0; font-weight: normal; }
h1 { flex: 1; font-size: 8px; }
.sections { padding: 3px 3px 0; }
.sections section { padding: 0 5px 3px; border-bottom: 1px solid #c5c7c9; background: #fdfdfd; }
h2 { display: flex; align-items: center; justify-content: space-between; height: 15px; color: #2f7da0; font-size: 8px; }
h2 svg { width: 8px; height: 6px; margin-right: -2px; }
.row { display: flex; align-items: center; gap: 2px; height: 15px; }
.row.tall { height: 18px; }
.row > label, .grow { flex: 1; }
.pick { display: flex; align-items: center; gap: 4px; flex: 1; height: 16px; padding-left: 2px; }
.selected { background: #fddc70; }
.need { width: 5px; height: 5px; border-radius: 50%; background: #d42d25; }
.ok { width: 7px; height: 7px; }
.tool { display: flex; align-items: center; justify-content: center; width: 13px; height: 14px; border: 1px solid #ddd; border-radius: 1px; }
.tool svg { width: 10px; height: 10px; }
.tool.wide { width: 17px; height: 17px; }
.tool .solid { width: 13px; height: 13px; }
.blue { background: #50a0bc; } .yellow { background: #fddc70; }
.split { width: 26px; height: 16px; gap: 4px; border-color: #bbb; }
.faded { color: #aaa; }
.field { display: flex; align-items: center; gap: 3px; width: 76px; height: 14px; padding: 0 3px; border: 1px solid #ccc; background: #fff; }
.field svg { width: 8px; height: 8px; }
.field select { flex: 1; min-width: 0; background: conic-gradient(from -45deg at 50% 100%, #222 90deg, transparent 0) right center / 6px 3px no-repeat; }
.field input { flex: 1; width: 20px; }
.field span { margin-right: 10px; font-size: 6px; }
.dim { color: #999; }
.dim svg { opacity: .5; }
.check { display: flex; align-items: center; gap: 4px; height: 14px; }
.check input { appearance: none; width: 7px; height: 7px; border: 1px solid #888; }
.sections .direction { padding: 1px 5px 5px; }
.direction .row { height: 19px; }
.sections .limits { padding-bottom: 4px; }
.sections .boolean { padding: 1px 5px 5px; }
.sections .closed { height: 15px; padding-bottom: 0; }
.closed h2 { height: 14px; }
.dialog > footer { display: flex; justify-content: flex-end; gap: 2px; padding: 5px 8px 0 0; }
.dialog > footer button { width: 30px; height: 14px; border: 1px solid #aaa; background: #e1e1e1; color: #222; line-height: 12px; }
.dialog > footer button:disabled { border-color: #ccc; background: #f2f2f2; color: #aaa; }

.arrows { position: absolute; top: 0; left: 0; width: 640px; height: 539px; pointer-events: none; }
.note { position: absolute; display: flex; align-items: center; gap: 5px; height: 18px; color: #fff; font-size: 9px; line-height: 18px; white-space: nowrap; }
.note b { width: 11px; height: 11px; border-radius: 50%; background: #e82225; font-size: 7px; line-height: 11px; text-align: center; }
.note span { position: relative; padding: 0 5px 0 4px; border-radius: 1px; background: #4b4b4b; }
.note span::before { content: ""; position: absolute; top: 7px; left: -2px; border: 2px solid transparent; border-right-color: #4b4b4b; border-left: 0; }
.note.one { left: 241px; top: 133px; } .note.two { left: 379px; top: 118px; }
.note.three { left: 488px; top: 130px; } .note.four { left: 516px; top: 468px; }
.watermark { position: absolute; right: 12px; bottom: 10px; color: #222; font-size: 17px; line-height: 24px; text-shadow: -1px -1px #fff, 0 -1px #fff; white-space: nowrap; }
```
